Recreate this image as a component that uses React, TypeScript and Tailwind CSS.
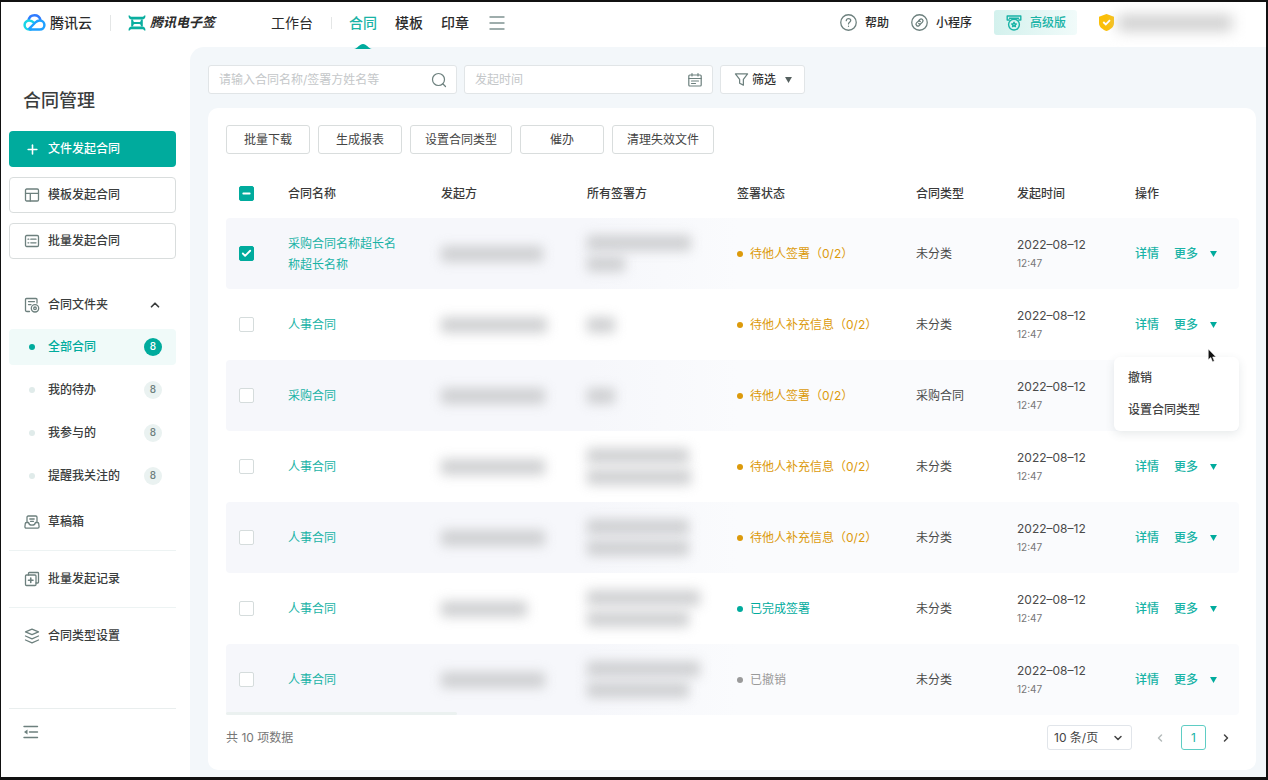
import type { ReactNode, SVGProps } from "react";
import { Check, ChevronDown, ChevronLeft, ChevronRight, ChevronUp, Minus, Plus } from "lucide-react";

function Icon({ children, ...props }: SVGProps<SVGSVGElement>) {
  return (
    <svg
      viewBox="0 0 16 16"
      fill="none"
      stroke="currentColor"
      strokeWidth="1.3"
      strokeLinecap="round"
      strokeLinejoin="round"
      aria-hidden="true"
      {...props}
    >
      {children}
    </svg>
  );
}

function CloudLogo() {
  return (
    <svg viewBox="0 0 24 18" className="h-[17px] w-[23px]" fill="none" strokeWidth="2.6" aria-hidden="true">
      <path d="M5.6 7.2C6.2 3.8 8.8 1.4 12 1.4c3.2 0 5.6 2 6.4 5" stroke="#2f7bff" />
      <path d="M11.6 9.3C9.9 7.7 8.3 6.9 6.3 6.9 3.6 6.9 1.5 8.9 1.5 11.6s2.1 4.9 4.9 4.9h2.4" stroke="#18d5e6" />
      <path d="M6.8 16.5h10.7c3 0 5-2.1 5-4.8s-2.1-4.9-4.9-4.9c-2 0-3.3.8-4.7 2.2L5.7 16.3" stroke="#1ea0ff" />
    </svg>
  );
}

function SignLogo() {
  return (
    <svg viewBox="0 0 18 16" className="h-4 w-[18px]" fill="#0aae9f" aria-hidden="true">
      <path d="M.5.5h1.200c.5 1 1.100 1.300 2 1.300h10.600c.9 0 1.500-.3 2-1.300h1.200c0 2.700-1.200 4.100-3.400 4.100H3.900C1.700 4.600.5 3.200.5.5Z" />
      <path d="M.5 15.500h1.200c.5-1 1.100-1.300 2-1.300h10.600c.9 0 1.500.3 2 1.300h1.200c0-2.700-1.200-4.100-3.400-4.100H3.900c-2.200 0-3.400 1.400-3.400 4.100Z" />
      <path d="M3.200 4.500h1.900c0 1.600.5 2.500 1.500 2.600h4.800c1-.1 1.500-1 1.500-2.600h1.900v7h-1.900c0-1.600-.5-2.500-1.500-2.600H6.600c-1 .1-1.500 1-1.500 2.600H3.200Z" />
    </svg>
  );
}

function Smudge({ widths }: { widths: string[] }) {
  return (
    <div className="flex flex-col gap-[5px]" aria-hidden="true">
      {widths.map((w, i) => (
        <div key={i} className={`h-4 bg-[#cbccce] opacity-90 blur-[6px] ${w}`} />
      ))}
    </div>
  );
}

function Tick({ id, label, checked = false, mixed = false }: { id: string; label: string; checked?: boolean; mixed?: boolean }) {
  return (
    <label htmlFor={id} className="grid h-[15px] w-[15px] place-items-center">
      <input
        id={id}
        type="checkbox"
        aria-label={label}
        defaultChecked={checked}
        className="col-start-1 row-start-1 h-[15px] w-[15px] appearance-none rounded-[2px] border border-[#d5dcdc] bg-white checked:border-[#00ab9d] checked:bg-[#00ab9d]"
      />
      {checked && (
        <span className="pointer-events-none col-start-1 row-start-1 text-white">
          {mixed ? <Minus size={11} strokeWidth={4} /> : <Check size={11} strokeWidth={4} />}
        </span>
      )}
    </label>
  );
}

type Row = {
  name: string;
  sender: string[];
  signers: string[];
  status: string;
  tone: "wait" | "done" | "off";
  type: string;
};

const WAIT_SIGN = "待他人签署（0/2）";
const WAIT_INFO = "待他人补充信息（0/2）";

const rows: Row[] = [
  { name: "采购合同名称超长名称超长名称", sender: ["w-[102px]"], signers: ["w-[104px]", "w-[38px]"], status: WAIT_SIGN, tone: "wait", type: "未分类" },
  { name: "人事合同", sender: ["w-[106px]"], signers: ["w-[28px]"], status: WAIT_INFO, tone: "wait", type: "未分类" },
  { name: "采购合同", sender: ["w-[104px]"], signers: ["w-[28px]"], status: WAIT_SIGN, tone: "wait", type: "采购合同" },
  { name: "人事合同", sender: ["w-[104px]"], signers: ["w-[102px]", "w-[104px]"], status: WAIT_INFO, tone: "wait", type: "未分类" },
  { name: "人事合同", sender: ["w-[104px]"], signers: ["w-[102px]", "w-[102px]"], status: WAIT_INFO, tone: "wait", type: "未分类" },
  { name: "人事合同", sender: ["w-[86px]"], signers: ["w-[113px]", "w-[102px]"], status: "已完成签署", tone: "done", type: "未分类" },
  { name: "人事合同", sender: ["w-[104px]"], signers: ["w-[113px]", "w-[102px]"], status: "已撤销", tone: "off", type: "未分类" },
];

const toneText = { wait: "text-[#dc9a0b]", done: "text-[#00ab9d]", off: "text-[#9a9a9a]" };
const toneDot = { wait: "bg-[#dc9a0b]", done: "bg-[#00ab9d]", off: "bg-[#9a9a9a]" };

const folders = [
  { label: "全部合同", active: true },
  { label: "我的待办", active: false },
  { label: "我参与的", active: false },
  { label: "提醒我关注的", active: false },
];

function TopBar() {
  return (
    <header className="flex h-[45px] items-center pb-1 pl-[22px] pr-3 text-[#2b2b2b]">
      <a href="#" className="flex items-center gap-1 text-sm font-medium">
        <CloudLogo />
        腾讯云
      </a>
      <span className="ml-[18px] h-4 w-px bg-[#e4e6e6]" />
      <a href="#" className="ml-[17px] flex items-center gap-1 text-[13px] font-bold italic">
        <SignLogo />
        腾讯电子签
      </a>
      <nav className="ml-14 flex items-center text-sm">
        <a href="#">工作台</a>
        <span className="ml-[18px] mr-[17px] h-3 w-px bg-[#e4e6e6]" />
        <a href="#" className="relative font-medium text-[#19b3a6]">
          合同
          <svg viewBox="0 0 18 5" className="absolute -bottom-4 left-[5px] h-[5px] w-[18px]" fill="#00ab9d" aria-hidden="true">
            <path d="M0 5C3.500 4.500 5.500 0 9 0s5.500 4.500 9 5Z" />
          </svg>
        </a>
        <a href="#" className="ml-[18px] font-medium">模板</a>
        <a href="#" className="ml-[18px] font-medium">印章</a>
        <button type="button" aria-label="更多菜单" className="ml-5 text-[#7f9291]">
          <Icon className="h-4 w-4" strokeWidth="1.4">
            <path d="M1 2h14M1 8h14M1 14h14" />
          </Icon>
        </button>
      </nav>
      <div className="ml-auto flex items-center text-xs font-medium">
        <a href="#" className="flex items-center gap-2">
          <Icon className="h-[17px] w-[17px] text-[#6d807e]" strokeWidth="1.2">
            <circle cx="8" cy="8" r="7.3" />
            <path d="M5.900 6.300c0-1.300.9-2 2.100-2s2.100.8 2.100 1.900c0 1.500-2.100 1.600-2.100 3.100M8 11.400v.2" />
          </Icon>
          帮助
        </a>
        <a href="#" className="ml-[22px] flex items-center gap-2">
          <Icon className="h-[17px] w-[17px] text-[#6d807e]" strokeWidth="1.2">
            <circle cx="8" cy="8" r="7.3" />
            <path d="M7.200 6.400 8.300 5.200a1.700 1.700 0 0 1 2.500 2.400L9.600 8.800a1.700 1.700 0 0 1-2.400 0M8.800 9.600l-1.100 1.200a1.700 1.700 0 0 1-2.500-2.400l1.200-1.200a1.700 1.700 0 0 1 2.400 0" />
          </Icon>
          小程序
        </a>
        <a
          href="#"
          className="ml-[22px] flex h-[25px] items-center gap-2 rounded-[3px] bg-linear-to-r from-[#d3f1ed] to-[#f1fbfa] pl-3 pr-[11px] text-[#19b3a6]"
        >
          <Icon className="h-4 w-4" strokeWidth="1.4">
            <path d="M3.300 5H1.200V1h13.600v4h-2.100M3.500 3.200h9" />
            <circle cx="8" cy="9.600" r="5.400" />
            <path d="m8 7.200.7 1.500 1.600.2-1.200 1.100.3 1.600L8 10.800l-1.400.8.3-1.600-1.200-1.100 1.600-.2Z" />
          </Icon>
          高级版
        </a>
        <div className="ml-[22px] flex items-center">
          <svg viewBox="0 0 15 17" className="h-[17px] w-[15px]" aria-hidden="true">
            <path d="M7.500 0 15 2.700V9c0 4-3.500 6.500-7.500 8C3.500 15.500 0 13 0 9V2.700Z" fill="#fbbf08" />
            <path d="m4.300 8 2.500 2.500 4.200-4.300" fill="none" stroke="#fff" strokeWidth="1.800" />
          </svg>
          <span className="ml-1 mr-[22px] h-4 w-[114px] bg-[#cfcfcf] blur-[7px]" />
        </div>
      </div>
    </header>
  );
}

function SideLink({ icon, children }: { icon: ReactNode; children: ReactNode }) {
  return (
    <a href="#" className="flex h-9 items-center gap-2 pl-[15px]">
      <span className="text-[#6d807e]">{icon}</span>
      {children}
    </a>
  );
}

function SideBar() {
  return (
    <aside className="flex w-[189px] shrink-0 flex-col pb-[37px] pl-2 pr-[14px] text-xs font-medium text-[#3a3d3d]">
      <h1 className="mt-10 pl-3.5 text-lg leading-7">合同管理</h1>
      <div className="mt-4 flex flex-col gap-2.5">
        <button type="button" className="flex h-9 items-center gap-2 rounded-sm bg-[#00ab9d] pl-4 text-white">
          <Plus size={15} strokeWidth={2.5} />
          文件发起合同
        </button>
        <button type="button" className="flex h-9 items-center gap-2 rounded-sm border border-[#d9dddd] bg-white pl-3.5">
          <Icon className="h-4 w-4 text-[#6d807e]">
            <rect x="1.500" y="2" width="13" height="12" rx="1.200" />
            <path d="M1.500 6.300h13M6.300 6.300V14" />
          </Icon>
          模板发起合同
        </button>
        <button type="button" className="flex h-9 items-center gap-2 rounded-sm border border-[#d9dddd] bg-white pl-3.5">
          <Icon className="h-4 w-4 text-[#6d807e]">
            <rect x="1.500" y="2.500" width="13" height="11" rx="1.200" />
            <path d="M4 6.200h.8M6.800 6.200H12M4 9.800h.8M6.800 9.800H12" />
          </Icon>
          批量发起合同
        </button>
      </div>
      <button type="button" className="mt-7 flex h-9 items-center gap-2 pl-[15px] text-left">
        <Icon className="h-4 w-4 text-[#6d807e]">
          <path d="M5.500 14.500H3c-.8 0-1.500-.5-1.500-1.300V2.500c0-.6.400-1 1-1h9.500c.6 0 1 .4 1 1V6M4.500 4.600h6M4.500 7.600h2.500" />
          <circle cx="11" cy="11.300" r="3.700" />
          <circle cx="11" cy="11.300" r="1.300" />
        </Icon>
        合同文件夹
        <ChevronUp size={14} strokeWidth={3} className="ml-auto mr-3.5" />
      </button>
      <ul className="mt-1.5 flex flex-col gap-[7px]">
        {folders.map((f) => (
          <li key={f.label}>
            <a
              href="#"
              className={`flex h-9 items-center rounded-sm pl-5 pr-[14px] ${f.active ? "bg-[#f0faf9] text-[#00ab9d]" : ""}`}
            >
              <span className={`h-1.5 w-1.5 rounded-full ${f.active ? "bg-[#00ab9d]" : "bg-[#e0ebea]"}`} />
              <span className="ml-[13px]">{f.label}</span>
              <span
                className={`ml-auto grid h-[18px] w-[18px] place-items-center rounded-full text-[10px] ${
                  f.active ? "bg-[#00ab9d] text-white" : "bg-[#eaf2f1] text-[#6d807e]"
                }`}
              >
                8
              </span>
            </a>
          </li>
        ))}
      </ul>
      <div className="mt-2.5">
        <SideLink
          icon={
            <Icon className="h-4 w-4">
              <path d="M3 8.500V3.200C3 2.500 3.500 2 4.200 2h7.600c.7 0 1.200.5 1.200 1.200v5.300M5.800 5h4.400M6.500 7.300h3M2.500 8.500h2c.5 1.900 1.700 2.700 3.500 2.700s3-.8 3.500-2.700h2c.6 0 1 .4 1.200 1l.4 3.300c0 .8-.5 1.400-1.300 1.400H2.200c-.8 0-1.300-.6-1.300-1.400l.4-3.300c.2-.6.600-1 1.200-1Z" />
            </Icon>
          }
        >
          草稿箱
        </SideLink>
      </div>
      <hr className="mb-2.5 mt-2.5 border-[#edf3f3]" />
      <SideLink
        icon={
          <Icon className="h-4 w-4">
            <path d="M4.500 4V2.300c0-.5.300-.8.800-.8h8.400c.5 0 .8.300.8.800v8.900c0 .5-.3.800-.8.800H12" />
            <rect x="1.500" y="4" width="10.500" height="10.500" rx="1" />
            <path d="M6.750 7v4.500M4.500 9.250H9" strokeWidth="1.600" />
          </Icon>
        }
      >
        批量发起记录
      </SideLink>
      <hr className="mb-2.5 mt-2.5 border-[#edf3f3]" />
      <SideLink
        icon={
          <Icon className="h-4 w-4">
            <path d="m8 1.200 6.500 2.700L8 6.600 1.500 3.900ZM1.500 8 8 10.800 14.500 8M1.500 12 8 14.800l6.500-2.800" />
          </Icon>
        }
      >
        合同类型设置
      </SideLink>
      <hr className="mt-auto border-[#e9eeee]" />
      <button type="button" aria-label="收起侧栏" className="ml-[14px] mt-[15px] w-4 text-[#6d807e]">
        <Icon className="h-4 w-4" strokeWidth="1.4">
          <path d="M1 2.500h13.500M6.500 8h8M1 13.500h13.500" />
          <path d="M4.500 5.500v5L1 8Z" fill="currentColor" stroke="none" />
        </Icon>
      </button>
    </aside>
  );
}

function MoreMenu() {
  return (
    <>
      <div
        role="menu"
        className="absolute -left-[21px] top-10 z-10 flex w-[125px] flex-col rounded-md bg-white px-3.5 py-[5px] text-[#444] shadow-[0_3px_10px_rgba(60,80,90,0.12)]"
      >
        <button type="button" role="menuitem" className="h-8 text-left">撤销</button>
        <button type="button" role="menuitem" className="h-8 text-left">设置合同类型</button>
      </div>
      <svg viewBox="0 0 10 16" className="absolute left-[72px] top-[31px] z-20 h-[15px] w-[10px]" aria-hidden="true">
        <path d="M1 1v11.500l2.700-2.400 1.800 4.500 2-.8-1.800-4.300H9.300Z" fill="#111" stroke="#fff" strokeWidth=".6" />
      </svg>
    </>
  );
}

function ContractTable() {
  const head = ["合同名称", "发起方", "所有签署方", "签署状态", "合同类型", "发起时间", "操作"];
  return (
    <table className="mt-[15px] w-full table-fixed text-left text-[#4a4a4a]">
      <colgroup>
        <col className="w-[62px]" />
        <col className="w-[153px]" />
        <col className="w-[146px]" />
        <col className="w-[150px]" />
        <col className="w-[179px]" />
        <col className="w-[101px]" />
        <col className="w-[118px]" />
        <col className="w-[104px]" />
      </colgroup>
      <thead>
        <tr className="h-[49px] text-[#3a3a3a]">
          <th className="pl-[13px]">
            <Tick id="pick-all" label="全选" checked mixed />
          </th>
          {head.map((h) => (
            <th key={h} className="font-medium">
              {h}
            </th>
          ))}
        </tr>
      </thead>
      <tbody>
        {rows.map((r, i) => {
          const near = i % 2 === 0 ? "bg-[#f6f7fb]" : "";
          const far = i % 2 === 0 ? "bg-[#fafbfd]" : "";
          const fade = i % 2 === 0 ? "bg-linear-to-r from-[#f6f7fb] to-[#fafbfd]" : "";
          return (
            <tr key={i} className="h-[71px]">
              <td className={`rounded-l-sm pl-[13px] ${near}`}>
                <Tick id={`pick-${i}`} label={`选择${r.name}`} checked={i === 0} />
              </td>
              <td className={`pr-9 leading-[21px] text-[#19b3a6] ${near}`}>
                <a href="#">{r.name}</a>
              </td>
              <td className={near}>
                <Smudge widths={r.sender} />
              </td>
              <td className={fade}>
                <Smudge widths={r.signers} />
              </td>
              <td className={far}>
                <span className={`flex items-center gap-[7px] ${toneText[r.tone]}`}>
                  <span className={`h-1.5 w-1.5 rounded-full ${toneDot[r.tone]}`} />
                  {r.status}
                </span>
              </td>
              <td className={far}>{r.type}</td>
              <td className={far}>
                <div className="text-xs leading-[18px]">2022–08–12</div>
                <div className="text-[10px] leading-[18px] text-[#777]">12:47</div>
              </td>
              <td className={`rounded-r-sm ${far}`}>
                <div className="relative flex items-center font-medium text-[#19b3a6]">
                  {i === 2 ? (
                    <span className="h-4" />
                  ) : (
                    <>
                      <a href="#">详情</a>
                      <button type="button" className="ml-[15px] flex items-center gap-3">
                        更多
                        <svg viewBox="0 0 8 7" className="h-[6px] w-[7px]" fill="#00ab9d" aria-hidden="true">
                          <path d="M0 0h8L4 7Z" />
                        </svg>
                      </button>
                    </>
                  )}
                  {i === 1 && <MoreMenu />}
                </div>
              </td>
            </tr>
          );
        })}
      </tbody>
    </table>
  );
}

function Field({ id, label, placeholder, icon }: { id: string; label: string; placeholder: string; icon: ReactNode }) {
  return (
    <label htmlFor={id} className="flex h-[29px] w-[249px] items-center rounded-[3px] border border-[#e1e5e7] bg-white pl-2.5 pr-[9px]">
      <input id={id} type="text" aria-label={label} placeholder={placeholder} className="min-w-0 flex-1 outline-none placeholder:text-[#c4c7c9]" />
      <span className="text-[#6d807e]">{icon}</span>
    </label>
  );
}

const tools = ["批量下载", "生成报表", "设置合同类型", "催办", "清理失效文件"];

export default function App() {
  return (
    <div className="flex min-h-screen flex-col border-b-[3px] border-l border-r-2 border-t-2 border-[#111] bg-white font-['Inter','Noto_Sans_CJK_SC',sans-serif]">
      <TopBar />
      <div className="flex flex-1">
        <SideBar />
        <main className="min-w-0 flex-1 rounded-tl-[14px] bg-[#f3f7fa] pb-[7px] pl-[18px] pr-[10px] pt-[18px] text-xs">
          <div className="flex gap-[7px]">
            <Field
              id="search"
              label="搜索合同"
              placeholder="请输入合同名称/签署方姓名等"
              icon={
                <Icon className="h-4 w-4" strokeWidth="1.2">
                  <circle cx="7.500" cy="7.500" r="6" />
                  <path d="m12 12 2.500 2.500" />
                </Icon>
              }
            />
            <Field
              id="date"
              label="发起时间"
              placeholder="发起时间"
              icon={
                <Icon className="h-4 w-4" strokeWidth="1.2">
                  <rect x="1.800" y="3" width="12.400" height="11" rx="1" />
                  <path d="M1.800 6.500h12.400M5 1.500V4M11 1.500V4M4.500 9h7M4.500 11.500h4" />
                </Icon>
              }
            />
            <button type="button" className="flex h-[29px] w-[85px] items-center rounded-[3px] border border-[#e1e5e7] bg-white pl-[13px] font-medium text-[#333]">
              <Icon className="h-[15px] w-[15px] text-[#6d807e]">
                <path d="M1.500 2h13L10 7.800V14l-4-2V7.800Z" />
              </Icon>
              <span className="ml-[3px]">筛选</span>
              <svg viewBox="0 0 8 7" className="ml-[9px] h-[6px] w-[7px]" fill="#55605f" aria-hidden="true">
                <path d="M0 0h8L4 7Z" />
              </svg>
            </button>
          </div>
          <section className="mt-[14px] rounded-[10px] bg-white pb-5 pl-[18px] pr-[17px] pt-[17px]">
            <div className="flex gap-2">
              {tools.map((t) => (
                <button key={t} type="button" className="h-[29px] min-w-[84px] rounded-[3px] border border-[#d9dddd] px-3.5 text-[#444]">
                  {t}
                </button>
              ))}
            </div>
            <ContractTable />
            <div className="-mt-[3px] h-[3px] w-[231px] rounded-full bg-[#ebf1f0]" />
            <div className="mt-[10px] flex items-center text-[#777]">
              <span>共 10 项数据</span>
              <label htmlFor="size" className="ml-auto grid items-center text-[#444]">
                <select id="size" aria-label="每页条数" className="col-start-1 row-start-1 h-[25px] w-[85px] appearance-none rounded-[3px] border border-[#e1e5ea] bg-white pl-1.5">
                  <option>10 条/页</option>
                </select>
                <ChevronDown size={12} strokeWidth={3} className="pointer-events-none col-start-1 row-start-1 mr-2 justify-self-end" />
              </label>
              <button type="button" aria-label="上一页" className="ml-[22px] text-[#b5bbbb]">
                <ChevronLeft size={12} strokeWidth={3} />
              </button>
              <button type="button" className="ml-[15px] h-[25px] w-[25px] rounded-[3px] border border-[#5fcdc4] text-[#19b3a6]">1</button>
              <button type="button" aria-label="下一页" className="ml-[14px] mr-[7px] text-[#444]">
                <ChevronRight size={12} strokeWidth={3} />
              </button>
            </div>
          </section>
        </main>
      </div>
    </div>
  );
}
